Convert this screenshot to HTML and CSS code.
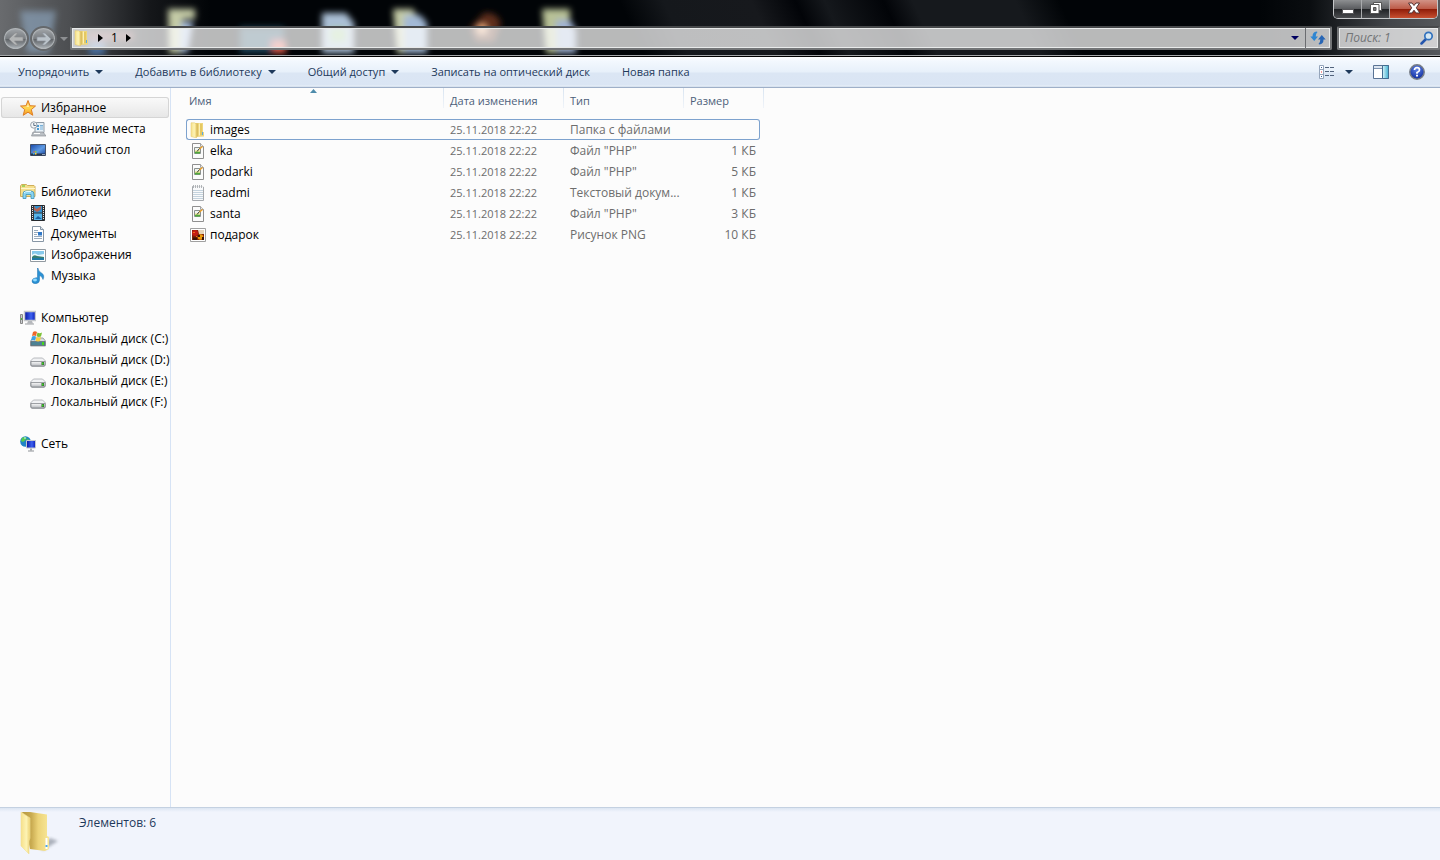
FILE: index.html
```html
<!DOCTYPE html>
<html lang="ru">
<head>
<meta charset="utf-8">
<meta name="viewport" content="width=device-width, initial-scale=1">
<title>1</title>
<link rel="stylesheet" href="styles.css">
</head>
<body>
<svg class="symbols" aria-hidden="true">
  <defs>
    <linearGradient id="gold" x1="0" x2="1"><stop offset="0" stop-color="#f6e08a"/><stop offset=".6" stop-color="#fdf3b4"/><stop offset="1" stop-color="#edd272"/></linearGradient>
    <linearGradient id="goldback" x1="0" x2="1"><stop offset="0" stop-color="#b6983f"/><stop offset=".35" stop-color="#c9ab51"/><stop offset=".6" stop-color="#ecd378"/><stop offset="1" stop-color="#f8e798"/></linearGradient>
    <linearGradient id="sky" x1="0" y1="0" x2="1" y2="1"><stop offset="0" stop-color="#1646a8"/><stop offset=".55" stop-color="#5f9be4"/><stop offset="1" stop-color="#163f96"/></linearGradient>
    <linearGradient id="screen" x1="0" x2="1"><stop offset="0" stop-color="#0715a0"/><stop offset=".6" stop-color="#3d61f0"/><stop offset="1" stop-color="#0a1cb4"/></linearGradient>
    <linearGradient id="metal" x1="0" y1="0" x2="0" y2="1"><stop offset="0" stop-color="#fafafa"/><stop offset="1" stop-color="#b5b8bd"/></linearGradient>
    <linearGradient id="star" x1="0" y1="0" x2="0" y2="1"><stop offset="0" stop-color="#ffa52c"/><stop offset=".5" stop-color="#ffd850"/><stop offset="1" stop-color="#f5941f"/></linearGradient>
    <linearGradient id="aqua" x1="0" x2="1"><stop offset="0" stop-color="#d7f5fb"/><stop offset="1" stop-color="#43b0d0"/></linearGradient>
    <radialGradient id="help" cx=".5" cy=".3" r=".7"><stop offset="0" stop-color="#5f83e8"/><stop offset="1" stop-color="#0d2a9c"/></radialGradient>
  </defs>
  <symbol id="i-folder" viewBox="0 0 16 16">
    <path d="M5 1h8v9h1v4.500L5 15z" fill="#eed67c"/>
    <path d="M6.500 1.500h1v13h-1z" fill="#c7a748"/><path d="M9 1.500h1v12H9z" fill="#fbf0b8"/><path d="M10 2h2v11h-2z" fill="#e5c862"/>
    <path d="M12 10h1v3h-1z" fill="#58a9e8"/>
    <path d="M1 .800h3.500L6.500 2v14L1 14.500z" fill="url(#gold)" stroke="#e2c76e" stroke-width=".5"/>
  </symbol>
  <symbol id="i-php" viewBox="0 0 16 16">
    <path d="M2.500.5h8l3 3v12h-11z" fill="#fbfbfb" stroke="#8f8f8f"/>
    <path d="M10.500.5v3h3" fill="#e8e8e8" stroke="#a5a5a5"/>
    <path d="M4.500 4.500h6v6h-6z" fill="#eef3f0" stroke="#8b918e"/>
    <path d="M5 8.500h5v2H5z" fill="#4faa3a"/><path d="M5 7.500h5v1H5z" fill="#f2e578"/>
    <path d="M7 8.500l3-3.500" stroke="#2b3020"/><path d="M9.500 6L12.500 3.500" stroke="#f0a022" stroke-width="1.300"/>
  </symbol>
  <symbol id="i-txt" viewBox="0 0 16 16">
    <path d="M2.500 1.500h11v14h-11z" fill="#f9fafb" stroke="#a6a9ad"/>
    <path d="M3 5.500h10M3 7.500h10M3 9.500h10M3 11.500h10M3 13.500h10" stroke="#c4d3de"/>
    <path d="M3 1h11" stroke="#fcfcfc" stroke-width="1.500"/>
    <path d="M3.500 0v3M5.500 0v3M7.500 0v3M9.500 0v3M11.500 0v3" stroke="#a0a4a8" stroke-width=".8"/>
  </symbol>
  <symbol id="i-png" viewBox="0 0 16 16">
    <path d="M.5 1.500h15v13H.5z" fill="#fff" stroke="#a1a1a1"/>
    <path d="M2 3h12v10H2z" fill="#802007"/><circle cx="5" cy="6" r="3" fill="#c51c14"/>
    <path d="M8 3h6v4L9 7z" fill="#e7d5b9"/><circle cx="10.500" cy="10" r="2.800" fill="#eb9b0b"/>
    <path d="M8 8h2v2H8zM12 10h2v3h-2zM3 10.500h4V13H3z" fill="#3b1407"/>
    <path d="M3 5h2v1H3zM6 9h1v1H6z" fill="#f56c16"/>
  </symbol>
  <symbol id="i-star" viewBox="0 0 16 16">
    <path d="M8 .5l2 5.200 5.500.3-4.200 3.600 1.500 5.700L8 12.200l-4.800 3.100 1.500-5.700L.5 6 6 5.700z" fill="url(#star)" stroke="#dd7f26" stroke-linejoin="round"/>
    <path d="M8 3l1 4-5 0 3-.5z" fill="#fff0ac"/>
  </symbol>
  <symbol id="i-recent" viewBox="0 0 16 16">
    <path d="M5 1.500h9v10H5z" fill="#e6f0f7" stroke="#8e9aa5"/>
    <path d="M7 4h2v2H7zM7 7h2v2H7z" fill="#4b9ad2"/><path d="M10 4.500h3M10 6h3M10 8h3" stroke="#79b0d8"/>
    <path d="M3 11h10l3 4H1.500z" fill="#babfc4" stroke="#8d9196" stroke-width=".7"/><path d="M4 12.500h6" stroke="#fff"/>
    <circle cx="3.800" cy="4" r="3.200" fill="#f6f8fa" stroke="#9aa3ac"/><path d="M3.800 2v2.500h2" fill="none" stroke="#5d6e80"/>
  </symbol>
  <symbol id="i-desktop" viewBox="0 0 16 16">
    <path d="M.5 2.500h15v11H.5z" fill="url(#sky)" stroke="#445169"/>
    <path d="M1 11.500h14v2H1z" fill="#26374f"/><path d="M3 10l1.500-1v1.500H3z" fill="#ef5b2c"/><path d="M5 9h1.500v1.500H5z" fill="#8bd03e"/><path d="M3 11h1.500v1.500H3z" fill="#3db1f2"/><path d="M5 11h1.500v1.500H5z" fill="#ffd541"/><path d="M12 12.500h3" stroke="#94a5bb"/>
  </symbol>
  <symbol id="i-lib" viewBox="0 0 16 16">
    <path d="M.5 2l1-1.500h5l1 1h6.500l1 1V12.500H.5z" fill="#f5df8d" stroke="#cfae58"/>
    <path d="M2 1.500h3v1H2z" fill="#55c728"/><path d="M1 4.500h14" stroke="#fff6cb"/>
    <path d="M3 14.500V10q0-3 3-3h5q3 0 3 3v4.500h-3v-4H6v4z" fill="#8bd4f1" stroke="#3e93bd" stroke-width=".8"/><path d="M4 9q1-1.500 3-1.500h4" fill="none" stroke="#e3faff"/>
  </symbol>
  <symbol id="i-video" viewBox="0 0 16 16">
    <path d="M1.500.5h13v15h-13z" fill="#35383d" stroke="#25282c"/><path d="M4 1h8v6.500H4z" fill="#3290cf"/><path d="M4 8.500h8V15H4z" fill="#55b4ea"/>
    <path d="M4 1l2 3 2-1 3-2v3L9 6 7 7 4 5z" fill="#b66553"/><path d="M5 14l3-3 4 3z" fill="#1a60a3"/>
    <path d="M2.500 1v14M13.500 1v14" stroke="#e7eaed" stroke-dasharray="1 1"/>
  </symbol>
  <symbol id="i-doc" viewBox="0 0 16 16">
    <path d="M2.500.5h8l3 3v12h-11z" fill="#fff" stroke="#8796a5"/><path d="M10.500.5v3h3" fill="#dce3ea" stroke="#8796a5"/>
    <path d="M4 4.500h4M4 6.500h4M4 8.500h3M4 10.500h8M4 12.500h8" stroke="#9aabbc"/><path d="M8 6h4v3.500H8z" fill="#2f78c8"/>
  </symbol>
  <symbol id="i-pic" viewBox="0 0 16 16">
    <path d="M.5 2.500h15v12H.5z" fill="#fff" stroke="#929aa1"/><path d="M2 4h12v4.500H2z" fill="#86c9ec"/><path d="M2 8q3-3 6 0l6-1v3H2z" fill="#eaf7fb"/><path d="M2 10q2-3 5-1l7 1v3H2z" fill="#377d70"/><path d="M2 11h12v2H2z" fill="#1f79a6"/>
  </symbol>
  <symbol id="i-music" viewBox="0 0 16 16">
    <path d="M8 0q0 3 3.500 5T13 11.500q-1-3.500-3.500-4V12q0 3.300-3.800 3.700Q2 15.700 2 13q.3-3 4.500-3.300H7.500V0z" fill="#2a91d4" stroke="#1d6eac" stroke-width=".5"/><ellipse cx="5" cy="12" rx="2" ry="1.400" fill="#8fdaff"/>
  </symbol>
  <symbol id="i-computer" viewBox="0 0 16 16">
    <path d="M.5 4.500h2v9h-2z" fill="#c9cccf" stroke="#888"/><path d="M1 8h1v2H1z" fill="#4abd28"/>
    <path d="M4.500 1.500h11v9h-11z" fill="url(#screen)" stroke="#c5c8cc" stroke-width="1.500"/><path d="M8 11h4l1 2.500H7z" fill="#b5b8bc"/><path d="M5 14h9" stroke="#9a9da1"/>
  </symbol>
  <symbol id="i-drive" viewBox="0 0 16 16">
    <path d="M3.500 6h9l3 3v4.500l-1 1h-13l-1-1V9z" fill="#f1f2f4" stroke="#a8abb0" stroke-width=".8"/><path d="M1 9.500h14v3.500l-1 1H2l-1-1z" fill="url(#metal)" stroke="#777b80" stroke-width=".7"/><path d="M11.500 10h2.500v3h-2.500z" fill="#3b5b37"/><path d="M12 10.500h1.500v2H12z" fill="#3ade24"/>
  </symbol>
  <symbol id="i-sysdrive" viewBox="0 0 16 16">
    <path d="M3 7h10l2.500 3v5h-15v-5z" fill="#d9dde0" stroke="#8b9095" stroke-width=".8"/><path d="M1 10.500h14V14.500H1z" fill="#4c8294" stroke="#5b6870" stroke-width=".7"/><path d="M12 11h2v3h-2z" fill="#43d51d"/>
    <path d="M3 1q2-1.500 4 0L6 5Q4 4 2 5z" fill="#ee6729"/><path d="M7.500 1.500q2 1.500 4.500 0l-1 4q-2.300 1-4.500-.2z" fill="#7cc136"/><path d="M2 5.500q2-1 4 0l-1 4q-2-1-4 0z" fill="#3da1e4"/><path d="M6.500 6q2 1 4.500 0l-1 4q-2 1-4.500-.3z" fill="#fbd042"/>
  </symbol>
  <symbol id="i-network" viewBox="0 0 16 16">
    <circle cx="5.500" cy="5.500" r="5.300" fill="#2084c6"/><path d="M2 2q3-2 5 0L5 4.500 3 6 1 5zM7 3l3 1v3L7 8z" fill="#55cb4b"/><path d="M4 1.500h2v1H4z" fill="#cdf3ff"/>
    <path d="M6.500 4.500h9v7.500h-9z" fill="url(#screen)" stroke="#c4c8cd"/><path d="M10 12.500h2v2h-2z" fill="#a7abb0"/><path d="M8 15h6" stroke="#8e9297"/>
  </symbol>
  <symbol id="i-down" viewBox="0 0 8 4"><path d="M0 0h8L4 4z" fill="currentColor"/></symbol>
</svg>

<div class="window">
  <header class="glass">
    <svg class="backdrop" width="640" height="55" aria-hidden="true">
      <defs><filter id="soft" x="-30%" y="-30%" width="160%" height="160%"><feGaussianBlur stdDeviation="3"/></filter></defs>
      <g filter="url(#soft)">
        <path d="M20 11h36l-7 42H27z" fill="#8ea6be" opacity=".65"/><path d="M88 32h46v8H88z" fill="#c86d70" opacity=".5"/><path d="M89 41h16v14H89z" fill="#4e7ab4" opacity=".8"/>
        <path d="M168 9h27v10h-12v34h-14z" fill="#c4cba6"/><path d="M181 22h12l-5 30h-8z" fill="#a9bfe0"/>
        <path d="M240 27h44v26h-44z" fill="#2b6685" opacity=".65"/><path d="M272 41h14v12h-14z" fill="#e15c4c"/>
        <path d="M322 13h24l8 10v30h-32z" fill="#aabfd6"/><path d="M330 28h16v14h-16z" fill="#a5cc96"/>
        <path d="M393 9h20l4 8v36h-20z" fill="#c4cba6"/><path d="M404 15h16l7 8v30h-23z" fill="#a3b9d5"/>
        <path d="M470 28l14-15q12-2 17 10l-7 19h-18z" fill="#743a20" opacity=".8"/><circle cx="482" cy="29" r="5" fill="#f4ae7d"/>
        <path d="M542 9h28v18l-7 26h-17z" fill="#b8c196"/><path d="M556 20h14l6 10v23h-19z" fill="#a0b3d3"/>
      </g>
    </svg>
    <div class="controls">
      <button class="ctl" aria-label="Свернуть"><svg width="12" height="12" viewBox="0 0 12 12"><path d="M.5 7.500h11v4H.5z" fill="#fff" stroke="#565659"/></svg></button>
      <button class="ctl" aria-label="Восстановить"><svg width="14" height="12" viewBox="0 0 14 12"><path d="M4.500.5h8v8h-8z" fill="#fff" stroke="#555"/><path d="M1.500 2.500h8.500v9H1.500z" fill="#fff" stroke="#555"/><path d="M4.500 5.500h2.500v3H4.500z" fill="#777" stroke="#555"/></svg></button>
      <button class="ctl close" aria-label="Закрыть"><svg width="14" height="12" viewBox="0 0 14 12"><path d="M1.500 1h3.500l2 2.500L9 1h3.500L9.300 5.800 12.800 11H9L7 8.200 5 11H1.200l3.500-5.200z" fill="#fff" stroke="#563434"/></svg></button>
    </div>
    <div class="address-row">
      <nav class="history" aria-label="История">
        <button class="round" aria-label="Назад"><svg width="16" height="14" viewBox="0 0 16 14"><path d="M7 1L1 7l6 6h3L6.500 9H15V5H6.500L10 1z" fill="#b3b5b6" stroke="#8c8e90" stroke-width=".7"/></svg></button>
        <button class="round" aria-label="Вперёд"><svg width="16" height="14" viewBox="0 0 16 14"><path d="M9 1l6 6-6 6H6l3.500-4H1V5h8.500L6 1z" fill="#bac2c9" stroke="#8c949c" stroke-width=".7"/></svg></button>
        <button class="recent" aria-label="Последние страницы"><svg width="8" height="4"><use href="#i-down"/></svg></button>
      </nav>
      <div class="address">
        <svg width="16" height="16"><use href="#i-folder"/></svg>
        <span class="crumb-arrow"></span>
        <button class="crumb">1</button>
        <span class="crumb-arrow"></span>
        <button class="drop" aria-label="Предыдущие адреса"><svg width="8" height="4"><use href="#i-down"/></svg></button>
        <button class="refresh" aria-label="Обновить"><svg width="16" height="14" viewBox="0 0 16 14"><path d="M6.500.5Q2.500 1 2.500 5.500H.3L4.200 10 8 5.500H5.700Q5.500 3 7.500 1z" fill="#2f86d2"/><path d="M9.500 13.500q4-.5 4-5h2.200L11.800 4 8 8.500h2.300q.2 2.500-1.800 4.500z" fill="#2866b5"/></svg></button>
      </div>
      <form class="search" role="search">
        <input type="text" placeholder="Поиск: 1" aria-label="Поиск">
        <button type="button" aria-label="Найти"><svg width="14" height="14" viewBox="0 0 14 14"><path d="M1.500 12.500L6 8" stroke="#2456ad" stroke-width="2.500" stroke-linecap="round"/><circle cx="8.500" cy="5" r="3.700" fill="#d6e8f2" stroke="#3272bd" stroke-width="1.700"/></svg></button>
      </form>
    </div>
  </header>

  <div class="toolbar" role="toolbar">
    <button class="tool">Упорядочить<svg width="8" height="4"><use href="#i-down"/></svg></button>
    <button class="tool">Добавить в библиотеку<svg width="8" height="4"><use href="#i-down"/></svg></button>
    <button class="tool">Общий доступ<svg width="8" height="4"><use href="#i-down"/></svg></button>
    <button class="tool">Записать на оптический диск</button>
    <button class="tool">Новая папка</button>
    <div class="view-tools">
      <button class="tool view" aria-label="Вид"><svg width="16" height="14" viewBox="0 0 16 14"><path d="M.5.500h4v13h-4z" fill="#fff" stroke="#95a5bb"/><path d="M0 4.500h5M0 9.500h5" stroke="#95a5bb"/><path d="M2 2h1v1H2zM2 11h1v1H2z" fill="#335f9d"/><path d="M2 6.500h1v1H2z" fill="#e33"/><path d="M6 2.500h9M6 6.500h9M6 10.500h9" stroke="#52637c" stroke-dasharray="4 1"/></svg><svg width="8" height="4"><use href="#i-down"/></svg></button>
      <button class="tool" aria-label="Область просмотра"><svg width="16" height="14" viewBox="0 0 16 14"><path d="M.5.500h15v13H.5z" fill="#fff" stroke="#597394"/><path d="M1 1h8v2H1z" fill="#dce5f0"/><path d="M1 3.500h8" stroke="#7d93af"/><path d="M9.500.500h6v13h-6z" fill="url(#aqua)" stroke="#426d91"/></svg></button>
      <button class="tool" aria-label="Справка"><svg width="16" height="16" viewBox="0 0 16 16"><circle cx="8" cy="8" r="7.200" fill="url(#help)" stroke="#777d86" stroke-width="1.500"/><path d="M5.500 6q0-2.300 2.500-2.300T10.500 6Q10.500 7.500 8 8.500V9.700" fill="none" stroke="#fff" stroke-width="1.700"/><path d="M7 10.700h2v1.800H7z" fill="#fff"/></svg></button>
    </div>
  </div>

  <div class="body">
    <nav class="tree" aria-label="Области навигации">
      <ul class="group">
        <li><a class="node root selected" href="#"><svg width="16" height="16"><use href="#i-star"/></svg>Избранное</a></li>
        <li><a class="node" href="#"><svg width="16" height="16"><use href="#i-recent"/></svg>Недавние места</a></li>
        <li><a class="node" href="#"><svg width="16" height="16"><use href="#i-desktop"/></svg>Рабочий стол</a></li>
      </ul>
      <ul class="group">
        <li><a class="node root" href="#"><svg width="16" height="16"><use href="#i-lib"/></svg>Библиотеки</a></li>
        <li><a class="node" href="#"><svg width="16" height="16"><use href="#i-video"/></svg>Видео</a></li>
        <li><a class="node" href="#"><svg width="16" height="16"><use href="#i-doc"/></svg>Документы</a></li>
        <li><a class="node" href="#"><svg width="16" height="16"><use href="#i-pic"/></svg>Изображения</a></li>
        <li><a class="node" href="#"><svg width="16" height="16"><use href="#i-music"/></svg>Музыка</a></li>
      </ul>
      <ul class="group">
        <li><a class="node root" href="#"><svg width="16" height="16"><use href="#i-computer"/></svg>Компьютер</a></li>
        <li><a class="node" href="#"><svg width="16" height="16"><use href="#i-sysdrive"/></svg>Локальный диск (C:)</a></li>
        <li><a class="node" href="#"><svg width="16" height="16"><use href="#i-drive"/></svg>Локальный диск (D:)</a></li>
        <li><a class="node" href="#"><svg width="16" height="16"><use href="#i-drive"/></svg>Локальный диск (E:)</a></li>
        <li><a class="node" href="#"><svg width="16" height="16"><use href="#i-drive"/></svg>Локальный диск (F:)</a></li>
      </ul>
      <ul class="group">
        <li><a class="node root" href="#"><svg width="16" height="16"><use href="#i-network"/></svg>Сеть</a></li>
      </ul>
    </nav>

    <main class="files">
      <table>
        <colgroup><col class="c-name"><col class="c-date"><col class="c-type"><col class="c-size"></colgroup>
        <thead>
          <tr><th class="sorted" scope="col">Имя<svg class="sort" width="7" height="4" viewBox="0 0 7 4"><path d="M3.500 0L7 4H0z" fill="#4d8bab"/></svg></th><th scope="col">Дата изменения</th><th scope="col">Тип</th><th scope="col">Размер</th></tr>
        </thead>
        <tbody>
          <tr class="focused"><td><span class="file"><svg width="16" height="16"><use href="#i-folder"/></svg>images</span></td><td class="date">25.11.2018 22:22</td><td>Папка с файлами</td><td></td></tr>
          <tr><td><span class="file"><svg width="16" height="16"><use href="#i-php"/></svg>elka</span></td><td class="date">25.11.2018 22:22</td><td>Файл "PHP"</td><td>1 КБ</td></tr>
          <tr><td><span class="file"><svg width="16" height="16"><use href="#i-php"/></svg>podarki</span></td><td class="date">25.11.2018 22:22</td><td>Файл "PHP"</td><td>5 КБ</td></tr>
          <tr><td><span class="file"><svg width="16" height="16"><use href="#i-txt"/></svg>readmi</span></td><td class="date">25.11.2018 22:22</td><td>Текстовый докум...</td><td>1 КБ</td></tr>
          <tr><td><span class="file"><svg width="16" height="16"><use href="#i-php"/></svg>santa</span></td><td class="date">25.11.2018 22:22</td><td>Файл "PHP"</td><td>3 КБ</td></tr>
          <tr><td><span class="file"><svg width="16" height="16"><use href="#i-png"/></svg>подарок</span></td><td class="date">25.11.2018 22:22</td><td>Рисунок PNG</td><td>10 КБ</td></tr>
        </tbody>
      </table>
    </main>
  </div>

  <footer class="details">
    <svg width="40" height="44" viewBox="0 0 40 44" aria-hidden="true">
      <defs><filter id="shade"><feGaussianBlur stdDeviation="1.500"/></filter></defs>
      <path d="M22 40L38 30 30 27 24 32z" fill="#7e8491" opacity=".6" filter="url(#shade)"/>
      <path d="M2 1h8l17 2.500V25l2 1v12l-4 2-15-2z" fill="url(#goldback)"/>
      <path d="M1 1l9 6v20l-1 3v13L1 35z" fill="url(#gold)" stroke="#f2df95" stroke-width=".6"/>
      <path d="M26.500 27v11" stroke="#fff" stroke-width="2"/><path d="M26.500 34v2" stroke="#4aa7ec" stroke-width="2"/>
    </svg>
    <p>Элементов: 6</p>
  </footer>
</div>
</body>
</html>
```
FILE: styles.css
```css
* { box-sizing: border-box; }
body {
  margin: 0;
  font: 12px/16px "Open Sans", "Noto Sans", sans-serif;
  color: #000;
  background: #fcfcfc;
}
button, input { font: inherit; color: inherit; }
button { padding: 0; border: 0; background: none; }
svg { flex: none; display: block; }
.symbols { position: absolute; width: 0; height: 0; }
.window { display: flex; flex-direction: column; min-height: 100vh; }

/* Glass frame */
.glass {
  position: relative;
  padding-bottom: 5px;
  border-bottom: 1px solid #000;
  box-shadow: inset 0 -1px #a5a7a9;
  background:
    linear-gradient(90deg, #696b6e 0, #4c4e51 70px, #15171a 150px, transparent 210px),
    linear-gradient(270deg, #55585b 0, #43464a 50px, #0a0d10 130px, transparent 180px),
    linear-gradient(65deg, transparent 44%, #15181c 47%, #17191d 53%, #020408 56%, #15181c 58%, #020408 62%, #16191d 64%, #16191d 71%, transparent 74%),
    #010407;
}
.backdrop { position: absolute; left: 0; top: 0; }
.controls {
  position: relative;
  display: flex;
  width: 105px;
  height: 19px;
  margin: 0 2px 0 auto;
  border: 1px solid #c5c7c9;
  border-top: 0;
  border-radius: 0 0 5px 5px;
  overflow: hidden;
}
.ctl {
  flex: 28;
  display: grid;
  place-items: center;
  padding-bottom: 3px;
  border-right: 1px solid #a8aaac;
  background: linear-gradient(#8d8f91, #595b5e 50%, #202225 51%, #4b4d50);
}
.close {
  flex: 48;
  border-right: 0;
  background: linear-gradient(#d29386, #bc5946 50%, #8f1c08 51%, #c74f30);
}
.address-row { position: relative; display: flex; align-items: flex-start; margin-top: 7px; }
.history { display: flex; align-items: center; width: 70px; gap: 1px; padding-left: 2px; }
.round {
  display: grid;
  place-items: center;
  width: 27px;
  height: 25px;
  border: 2px solid #65686b;
  border-radius: 50%;
  background: linear-gradient(#a4a8ac, #7a7e82 50%, #5b5f63 51%, #aeb4b9);
  box-shadow: inset 0 0 1px 1px #b4b8bb;
}
.recent { margin-left: 2px; color: #8c8e91; }
.address, .search {
  display: flex;
  align-items: center;
  height: 24px;
  border: 2px solid #737577;
  border-top-color: #47494b;
  border-radius: 2px;
  background: rgba(255, 255, 255, .72);
  box-shadow: inset 0 0 0 1px #e8eaea;
}
.address { flex: 1; padding-left: 2px; }
.crumb-arrow {
  margin: 0 8px;
  border: solid transparent;
  border-width: 4px 0 4px 5px;
  border-left-color: #000;
}
.drop { margin-left: auto; padding: 8px 6px; color: #000060; }
.refresh { display: grid; place-items: center; align-self: stretch; width: 25px; border-left: 1px solid #6b6d70; }
.search { width: 103px; margin: 0 0 0 5px; padding: 0 4px 0 6px; }
.search input { flex: 1; min-width: 0; padding: 0; border: 0; outline: 0; background: none; font-style: italic; }
.search input::placeholder { color: #727476; opacity: 1; }

/* Command bar */
.toolbar {
  display: flex;
  align-items: center;
  gap: 32px;
  height: 31px;
  padding: 0 15px 0 18px;
  border-bottom: 1px solid #9eafc8;
  background: linear-gradient(#fff, #f3f8fe 4px, #e7f0fa 15px, #dbe6f4 16px, #dae5f4 28px, #e9f0f8 29px, #c7d5e6);
  color: #1e395b;
  font-size: 11px;
}
.tool { display: flex; align-items: center; gap: 6px; white-space: nowrap; }
.view-tools { display: flex; align-items: center; gap: 20px; margin-left: auto; }
.view { gap: 10px; }

/* Panes */
.body { flex: 1; display: flex; }
.tree { width: 171px; padding: 9px 1px; border-right: 1px solid #d6e3f5; }
.group { margin: 0 0 21px; padding: 0; list-style: none; }
.node {
  display: flex;
  align-items: center;
  gap: 5px;
  height: 21px;
  padding-left: 29px;
  color: #000;
  text-decoration: none;
  white-space: nowrap;
}
.root { padding-left: 19px; }
.selected { border-radius: 3px; background: linear-gradient(#fafafa, #e6e6e6); box-shadow: inset 0 0 0 1px #d5d5d5; }
.files { flex: 1; padding-left: 15px; }
table { table-layout: fixed; width: 574px; border-spacing: 0; color: #6d6d6d; }
.c-name { width: 258px; }
.c-date, .c-type { width: 120px; }
th {
  position: relative;
  height: 31px;
  padding: 5px 6px 0;
  font-size: 11px;
  font-weight: 400;
  text-align: left;
  vertical-align: top;
  color: #4c607a;
}
th:first-child { padding-left: 3px; }
th::after {
  content: "";
  position: absolute;
  top: 0;
  right: 0;
  width: 1px;
  height: 20px;
  background: linear-gradient(#d8e4f1, #f0f4f9);
}
th:last-child::after { right: -4px; }
.sort { position: absolute; top: 1px; left: 50%; margin-left: -5px; }
td { height: 21px; padding: 0 6px; border: 0 solid transparent; border-width: 1px 0; white-space: nowrap; }
td:first-child { padding-left: 3px; border-left-width: 1px; border-radius: 3px 0 0 3px; }
td:last-child { padding-right: 3px; text-align: right; border-right-width: 1px; border-radius: 0 3px 3px 0; }
.focused td { border-color: #7da2ce; }
.date { font-size: 11px; }
.file { display: flex; align-items: center; gap: 4px; color: #000; }
.details {
  display: flex;
  gap: 19px;
  height: 53px;
  padding: 3px 20px 0;
  border-top: 1px solid #c4d1e1;
  background: linear-gradient(#dce6f2, #f1f4fc 4px);
  color: #1e395b;
}
.details p { margin: 4px 0 0; }
```
